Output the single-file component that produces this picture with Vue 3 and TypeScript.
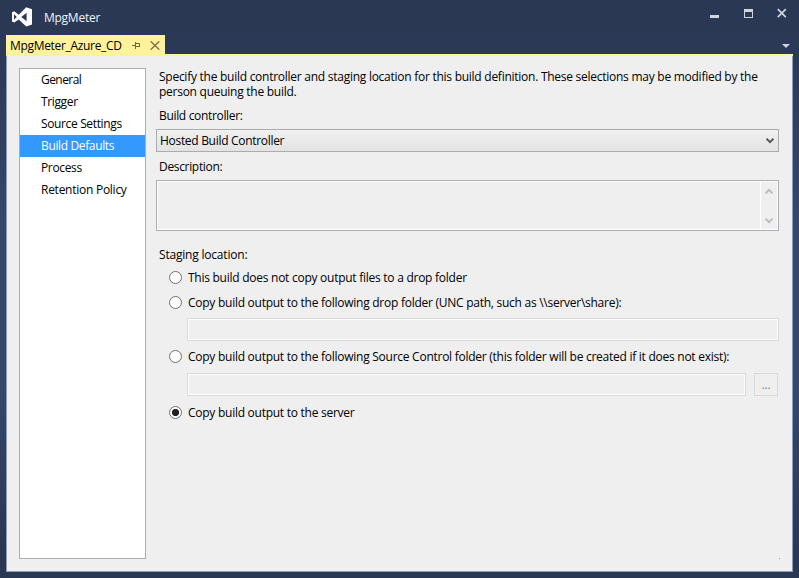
<script setup lang="ts">
import { ref } from 'vue'

const sections: string[] = ['General', 'Trigger', 'Source Settings', 'Build Defaults', 'Process', 'Retention Policy']
const active = ref('Build Defaults')
const staging = ref('server')
</script>

<template>
  <div class="window">
    <header class="titlebar">
      <svg class="logo" width="22" height="22" viewBox="0 0 22 22">
        <path fill="#fff" fill-rule="evenodd" d="M15.2 1.2 L21 3.2 V18.4 L15.2 20.6 L7.8 13.5 L3.2 16.6 L1 15.4 V6.2 L3.2 5.2 L7.8 8.7 Z M3 8.3 V13.6 L5.8 11 Z M10.3 11 L15.6 15.2 V6.8 Z" />
      </svg>
      <span class="title">MpgMeter</span>
      <svg class="controls" width="80" height="16" viewBox="0 0 80 16">
        <path fill="#ced4e0" d="M0 9h9v3H0z M34 3h9v9h-9z M35 6v5h7V6z" fill-rule="evenodd" />
        <path d="M67.8 3.2l8 8M75.8 3.2l-8 8" stroke="#ced4e0" stroke-width="1.7" fill="none" />
      </svg>
    </header>
    <div class="tabs">
      <div class="tab">
        <span class="tab-name">MpgMeter_Azure_CD</span>
        <svg class="pin" width="9" height="7" viewBox="0 0 9 7">
          <path d="M0 3.5h3M3.5 0v7M4 1.5h3.5v3.5M4 4.5h4" stroke="#75633d" fill="none" />
        </svg>
        <svg class="close" width="10" height="9" viewBox="0 0 10 9">
          <path d="M.7.4l8.6 8.2M9.3.4L.7 8.6" stroke="#75633d" stroke-width="1.3" fill="none" />
        </svg>
      </div>
      <svg class="more" width="8" height="4" viewBox="0 0 8 4"><path d="M0 0h8L4 4z" fill="#ced4dd" /></svg>
    </div>
    <main class="panel">
      <nav class="list">
        <div v-for="s in sections" :key="s" class="item" :class="{ active: s === active }" @click="active = s">
          <span>{{ s }}</span>
        </div>
      </nav>
      <section class="form">
        <div class="intro">
          <div>Specify the build controller and staging location for this build definition. These selections may be modified by the</div>
          <div>person queuing the build.</div>
        </div>
        <div class="label controller">Build controller:</div>
        <div class="combo">
          <span>Hosted Build Controller</span>
          <svg width="8" height="6" viewBox="0 0 8 6"><path d="M.5 .7L4 4.2L7.5 .7" stroke="#555" stroke-width="2" fill="none" /></svg>
        </div>
        <div class="label description">Description:</div>
        <div class="memo">
          <div class="memo-text"></div>
          <div class="scroll">
            <svg width="8" height="6" viewBox="0 0 8 6"><path d="M.5 5.3L4 1.8L7.5 5.3" stroke="#bbb" stroke-width="2" fill="none" /></svg>
            <svg width="8" height="6" viewBox="0 0 8 6"><path d="M.5 .7L4 4.2L7.5 .7" stroke="#bbb" stroke-width="2" fill="none" /></svg>
          </div>
        </div>
        <div class="label staging">Staging location:</div>
        <div class="option o1" @click="staging = 'none'">
          <i class="radio" :class="{ on: staging === 'none' }"></i><span>This build does not copy output files to a drop folder</span>
        </div>
        <div class="option o2" @click="staging = 'drop'">
          <i class="radio" :class="{ on: staging === 'drop' }"></i><span>Copy build output to the following drop folder (UNC path, such as \\server\share):</span>
        </div>
        <div class="row r1"><div class="field"></div></div>
        <div class="option o3" @click="staging = 'source'">
          <i class="radio" :class="{ on: staging === 'source' }"></i><span>Copy build output to the following Source Control folder (this folder will be created if it does not exist):</span>
        </div>
        <div class="row r2"><div class="field"></div><div class="browse">...</div></div>
        <div class="option o4" @click="staging = 'server'">
          <i class="radio" :class="{ on: staging === 'server' }"></i><span>Copy build output to the server</span>
        </div>
      </section>
      <i class="grip"></i>
    </main>
  </div>
</template>

<style>
body { margin: 0; overflow: hidden; }
</style>

<style scoped>
* { box-sizing: border-box; }
.window { width: 799px; height: 578px; padding: 0 6px 6px; display: flex; flex-direction: column; background: linear-gradient(#2a3854 0, #2b3956 60px, #35496a 230px, #35496a 380px, #2a3854 540px, #2a3854 100%); font: 12px/16px "Open Sans", "Noto Sans", sans-serif; letter-spacing: -0.26px; color: #000; }
.titlebar { height: 35px; display: flex; align-items: flex-start; color: #f1f3f7; }
.logo { margin: 6px 0 0 5px; }
.title { margin: 10px auto 0 11px; }
.controls { margin: 6px 3px 0 0; }
.tabs { height: 21px; flex: none; border-bottom: 2px solid #fff29d; display: flex; justify-content: space-between; }
.tab { width: 159px; height: 19px; background: #fff29d; display: flex; padding-left: 4px; }
.tab-name { margin-top: 3px; width: 122px; white-space: nowrap; letter-spacing: -0.32px; }
.pin { margin-top: 7px; }
.close { margin: 6px 0 0 9px; }
.more { margin: 9px 3px 0 0; }
.panel { position: relative; flex: 1; display: flex; background: #efefef; border: 1px solid #8e9bbc; border-top: 0; padding: 12px 13px 12px 12px; }
.list { width: 127px; height: 491px; background: #fff; border: 1px solid #abadb3; }
.item { height: 22px; padding: 3px 0 0 21px; white-space: nowrap; letter-spacing: -0.36px; }
.item:first-child { letter-spacing: -0.55px; }
.item:last-child { letter-spacing: -0.26px; }
.item.active { background: #3399ff; color: #fff; }
.form { margin-left: 10px; width: 623px; white-space: nowrap; }
.intro { margin: 1px 0 0 3px; line-height: 15px; height: 30px; }
.label { height: 16px; margin-left: 3px; letter-spacing: -0.33px; }
.controller { margin-top: 9px; }
.combo { margin-top: 5px; height: 23px; border: 1px solid #acacac; background: linear-gradient(#f0f0f0, #e3e3e3); display: flex; align-items: center; justify-content: space-between; padding: 0 4px 0 3px; letter-spacing: -0.3px; }
.description { margin-top: 7px; }
.memo { margin-top: 5px; height: 51px; border: 1px solid #abadb3; padding: 1px; background: #fff; display: flex; }
.memo-text { flex: 1; background: #efefef; }
.scroll { width: 16px; margin-left: 1px; background: #efefef; display: flex; flex-direction: column; align-items: center; justify-content: space-between; padding: 6px 1px 5px 0; }
.label.staging { margin-top: 16px; letter-spacing: -0.2px; }
.option { display: flex; align-items: flex-start; height: 16px; padding-left: 13px; gap: 6px; }
.radio { width: 13px; height: 13px; margin-top: 1px; flex: none; border-radius: 50%; border: 1px solid #707070; background: #fff; }
.radio.on { background: radial-gradient(circle at center, #212121 3.2px, #fff 4px); }
.o1 { margin-top: 7px; }
.o2 { margin-top: 9px; }
.row { display: flex; gap: 8px; height: 23px; padding-left: 31px; }
.field { flex: 1; border: 1px solid #d9d9d9; box-shadow: inset 0 0 0 1px #fff; }
.r1 { margin-top: 7px; }
.o3 { margin-top: 8px; }
.r2 { margin-top: 8px; padding-right: 1px; }
.browse { width: 24px; border: 1px solid #d9d9d9; text-align: center; line-height: 21px; color: #838383; }
.o4 { margin-top: 9px; }
.grip { position: absolute; right: 12px; bottom: 12px; width: 1px; height: 1px; background: #999; }
</style>
